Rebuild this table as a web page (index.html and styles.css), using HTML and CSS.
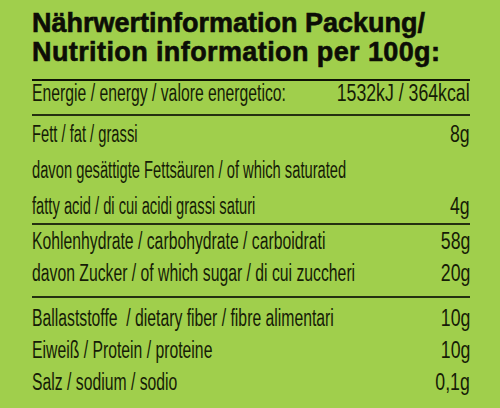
FILE: index.html
```html
<!DOCTYPE html>
<html lang="de">
<head>
<meta charset="utf-8">
<title>Nährwertinformation</title>
<link rel="stylesheet" href="styles.css">
</head>
<body>
<div class="panel">
  <h1 class="title">
    <span class="title-line">Nährwertinformation Packung/</span>
    <span class="title-line">Nutrition information per 100g:</span>
  </h1>
  <section class="group group-energy">
    <div class="row"><span class="label">Energie / energy / valore energetico:</span><span class="val">1532kJ / 364kcal</span></div>
  </section>
  <section class="group group-fat">
    <div class="row"><span class="label">Fett / fat / grassi</span><span class="val">8g</span></div>
    <div class="row"><span class="label">davon gesättigte Fettsäuren / of which saturated</span></div>
    <div class="row"><span class="label">fatty acid / di cui acidi grassi saturi</span><span class="val">4g</span></div>
  </section>
  <section class="group group-carb">
    <div class="row"><span class="label">Kohlenhydrate / carbohydrate / carboidrati</span><span class="val">58g</span></div>
    <div class="row"><span class="label">davon Zucker / of which sugar / di cui zuccheri</span><span class="val">20g</span></div>
  </section>
  <section class="group group-rest">
    <div class="row"><span class="label">Ballaststoffe&nbsp; / dietary fiber / fibre alimentari</span><span class="val">10g</span></div>
    <div class="row"><span class="label">Eiweiß / Protein / proteine</span><span class="val">10g</span></div>
    <div class="row"><span class="label">Salz / sodium / sodio</span><span class="val">0,1g</span></div>
  </section>
</div>
</body>
</html>
```

FILE: styles.css
```css
html, body {
  margin: 0;
  padding: 0;
  background: #a0cf4c;
  overflow: hidden;
}

body {
  width: 500px;
  height: 408px;
  color: #161c06;
  font-family: "Liberation Sans", Arial, sans-serif;
}

.panel {
  width: 438px;
  margin-left: 32px;
}

.title {
  margin: 0;
  padding: 9px 0 12px;
  font-family: "Liberation Sans", Arial, sans-serif;
  font-weight: bold;
  font-size: 27px;
  line-height: 29px;
  color: #0c0d06;
  -webkit-text-stroke: 0.6px #0c0d06;
  border-bottom: 2px solid #0f1306;
}

.title-line {
  display: block;
  white-space: nowrap;
}

.title-line + .title-line {
  letter-spacing: 0.4px;
}

.group {
  display: flex;
  flex-direction: column;
}

.group-energy {
  padding: 0 0 9px;
  border-bottom: 2px solid #243010;
}

.group-fat {
  padding: 6px 0 5px;
  gap: 12px;
  border-bottom: 2px solid #243010;
}

.group-carb {
  padding: 4px 0 11px;
  gap: 8px;
  border-bottom: 2px solid #243010;
}

.group-rest {
  padding: 8px 0 0;
  gap: 8px;
}

.row {
  display: flex;
  align-items: baseline;
  height: 24px;
  font-size: 23px;
  line-height: 24px;
  white-space: nowrap;
}

.label {
  flex: 1 1 0;
  min-width: 0;
  transform: scaleX(0.685);
  transform-origin: 0 50%;
}

.group-fat .label {
  transform: scaleX(0.64);
}

.val {
  flex: none;
  transform: scaleX(0.77);
  transform-origin: 100% 50%;
}
```
